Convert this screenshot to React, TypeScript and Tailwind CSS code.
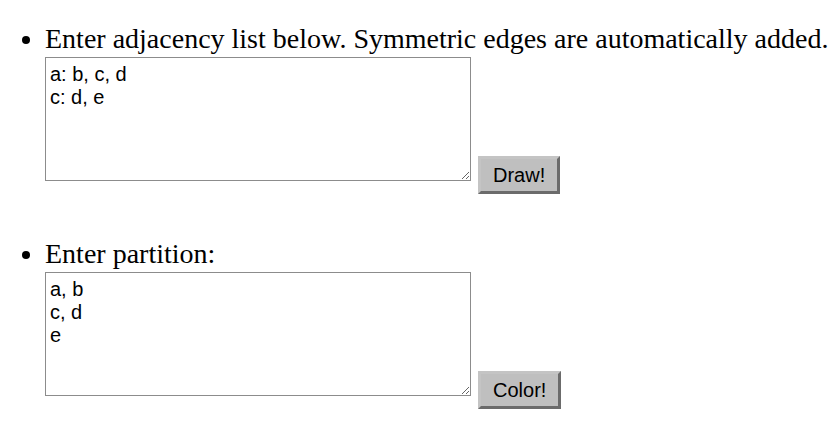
export default function App() {
  const serif = { fontFamily: '"Liberation Serif", "Times New Roman", serif' }
  const sans = '[font-family:"Liberation_Sans",Arial,sans-serif]'

  return (
    <div className="min-h-[433px] w-[838px] bg-white text-black" style={serif}>
      <ul className="list-disc pl-[45px] pt-[23px]">
        <li className="text-[28px] leading-[31px]">
          Enter adjacency list below. Symmetric edges are automatically added.
          <div className="mt-[3px] flex items-start">
            <textarea
              defaultValue={"a: b, c, d\nc: d, e"}
              className={`h-[124px] w-[426px] border border-[#8c8c8c] px-[4px] py-[5px] text-[20px] leading-[23px] ${sans}`}
            />
            <button
              className={`ml-[7px] mt-[99px] h-[38px] border-[3px] border-b-[#6b6b6b] border-l-[#c4c4c4] border-r-[#6b6b6b] border-t-[#c4c4c4] bg-[#bfbfbf] px-[12px] text-[20px] leading-[23px] ${sans}`}
            >
              Draw!
            </button>
          </div>
        </li>
        <li className="mt-[44px] text-[28px] leading-[31px]">
          Enter partition:
          <div className="mt-[3px] flex items-start">
            <textarea
              defaultValue={"a, b\nc, d\ne"}
              className={`h-[124px] w-[426px] border border-[#8c8c8c] px-[4px] py-[5px] text-[20px] leading-[23px] ${sans}`}
            />
            <button
              className={`ml-[7px] mt-[99px] h-[38px] border-[3px] border-b-[#6b6b6b] border-l-[#c4c4c4] border-r-[#6b6b6b] border-t-[#c4c4c4] bg-[#bfbfbf] px-[12px] text-[20px] leading-[23px] ${sans}`}
            >
              Color!
            </button>
          </div>
        </li>
      </ul>
    </div>
  )
}
